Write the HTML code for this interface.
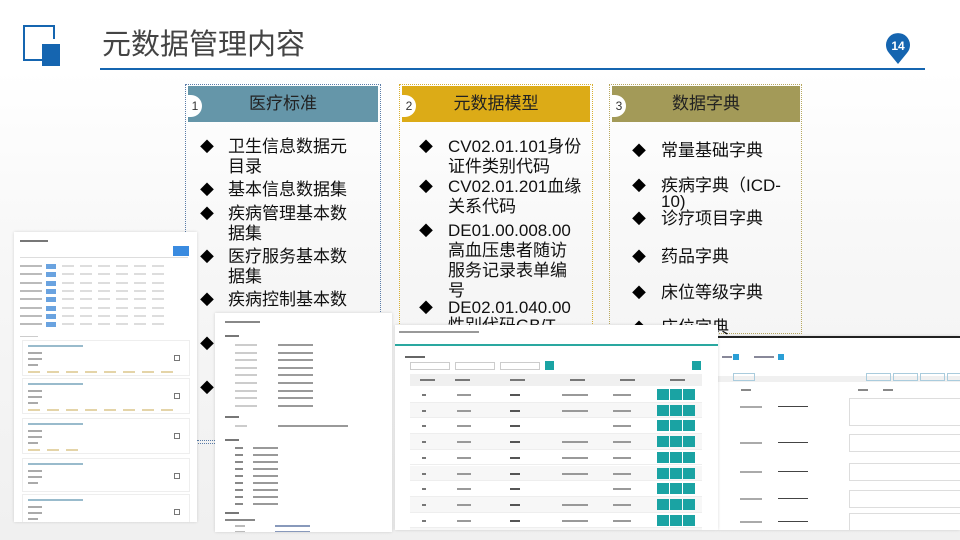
<!DOCTYPE html>
<html><head><meta charset="utf-8">
<style>
*{margin:0;padding:0;box-sizing:border-box}
body{width:960px;height:540px;overflow:hidden;background:#fff;position:relative;font-family:"Liberation Sans","Noto Sans CJK SC",sans-serif}
.abs{position:absolute}
.bg{position:absolute;left:0;top:70px;width:960px;height:470px;background:linear-gradient(#fff 0,#f7f7f7 40%,#f0f0f0 100%)}
.t{position:absolute;font-size:17px;color:#111;white-space:nowrap;line-height:20px}
.d{position:absolute;font-size:14px;color:#000;line-height:20px}
.box{position:absolute;border:1.5px dotted}
.hd{position:absolute;height:36px;color:#222;font-size:17px;text-align:center;line-height:36px}
.num{position:absolute;width:14px;height:22px;background:#fff;border-radius:0 11px 11px 0;font-size:12px;line-height:22px;text-align:center;color:#333}
.panel{position:absolute;background:#fff;box-shadow:0 0 3px rgba(0,0,0,.15);overflow:hidden}
.bar{position:absolute;height:3px;background:#bbb}
</style></head><body>
<div class="bg"></div>
<div class="abs" style="left:23px;top:25px;width:20px;height:36px;border:2px solid #1565b0;border-right:none"></div>
<div class="abs" style="left:23px;top:25px;width:32px;height:2px;background:#1565b0"></div>
<div class="abs" style="left:23px;top:59px;width:20px;height:2px;background:#1565b0"></div>
<div class="abs" style="left:53px;top:25px;width:2px;height:14px;background:#1565b0"></div>
<div class="abs" style="left:42px;top:44px;width:18px;height:22px;background:#1565b0"></div>
<div class="abs" style="left:102px;top:26px;font-size:29px;color:#444;line-height:38px">元数据管理内容</div>
<div class="abs" style="left:100px;top:68px;width:825px;height:2px;background:#1565b0"></div>
<svg class="abs" style="left:884px;top:31px" width="28" height="34" viewBox="0 0 28 34"><path d="M14 33 L5 22 A12 12 0 1 1 23 22 Z" fill="#1565b0"/><text x="14" y="19" font-size="12" font-weight="bold" fill="#fff" text-anchor="middle" font-family="Liberation Sans">14</text></svg>

<div class="box" style="left:185px;top:84px;width:196px;height:360px;border-color:#5a7ca8"></div>
<div class="box" style="left:399px;top:84px;width:194px;height:250px;border-color:#d8b030"></div>
<div class="box" style="left:609px;top:84px;width:193px;height:250px;border-color:#b8a860"></div>
<div class="hd" style="left:188px;top:86px;width:190px;background:#6596a9">医疗标准</div>
<div class="hd" style="left:402px;top:86px;width:188px;background:#dcab17">元数据模型</div>
<div class="hd" style="left:612px;top:86px;width:188px;background:#a39a58">数据字典</div>
<div class="num" style="left:188px;top:95px">1</div>
<div class="num" style="left:402px;top:95px">2</div>
<div class="num" style="left:612px;top:95px">3</div>

<div class="d" style="left:200px;top:137px">◆</div><div class="t" style="left:228px;top:137px">卫生信息数据元</div>
<div class="t" style="left:228px;top:157px">目录</div>
<div class="d" style="left:200px;top:180px">◆</div><div class="t" style="left:228px;top:180px">基本信息数据集</div>
<div class="d" style="left:200px;top:204px">◆</div><div class="t" style="left:228px;top:204px">疾病管理基本数</div>
<div class="t" style="left:228px;top:224px">据集</div>
<div class="d" style="left:200px;top:247px">◆</div><div class="t" style="left:228px;top:247px">医疗服务基本数</div>
<div class="t" style="left:228px;top:267px">据集</div>
<div class="d" style="left:200px;top:290px">◆</div><div class="t" style="left:228px;top:290px">疾病控制基本数</div>
<div class="d" style="left:200px;top:334px">◆</div>
<div class="d" style="left:200px;top:378px">◆</div>
<div class="d" style="left:419px;top:137px">◆</div><div class="t" style="left:448px;top:137px">CV02.01.101身份</div>
<div class="t" style="left:448px;top:157px">证件类别代码</div>
<div class="d" style="left:419px;top:177px">◆</div><div class="t" style="left:448px;top:177px">CV02.01.201血缘</div>
<div class="t" style="left:448px;top:197px">关系代码</div>
<div class="d" style="left:419px;top:221px">◆</div><div class="t" style="left:448px;top:221px">DE01.00.008.00</div>
<div class="t" style="left:448px;top:241px">高血压患者随访</div>
<div class="t" style="left:448px;top:261px">服务记录表单编</div>
<div class="t" style="left:448px;top:281px">号</div>
<div class="d" style="left:419px;top:298px">◆</div><div class="t" style="left:448px;top:298px">DE02.01.040.00</div>
<div class="t" style="left:448px;top:316px">性别代码GB/T</div>
<div class="d" style="left:632px;top:141px">◆</div><div class="t" style="left:661px;top:141px">常量基础字典</div>
<div class="d" style="left:632px;top:176px">◆</div><div class="t" style="left:661px;top:176px">疾病字典（ICD-</div>
<div class="t" style="left:661px;top:192px">10)</div>
<div class="d" style="left:632px;top:209px">◆</div><div class="t" style="left:661px;top:209px">诊疗项目字典</div>
<div class="d" style="left:632px;top:247px">◆</div><div class="t" style="left:661px;top:247px">药品字典</div>
<div class="d" style="left:632px;top:283px">◆</div><div class="t" style="left:661px;top:283px">床位等级字典</div>
<div class="d" style="left:632px;top:318px">◆</div><div class="t" style="left:661px;top:318px">床位字典</div>

<div class="abs" style="left:197px;top:440px;width:20px;border-top:1.5px dotted #5a7ca8"></div>

<div class="panel" id="p1" style="left:14px;top:232px;width:183px;height:290px"></div>
<div class="panel" id="p2" style="left:215px;top:313px;width:177px;height:219px"></div>
<div class="panel" id="p4" style="left:718px;top:336px;width:242px;height:194px;border-top:2px solid #222"></div>
<div class="panel" id="p3" style="left:395px;top:325px;width:323px;height:205px"></div>

<script>
function bar(p,x,y,w,c,h){var d=document.createElement('div');d.className='bar';d.style.left=x+'px';d.style.top=y+'px';d.style.width=w+'px';if(c)d.style.background=c;if(h)d.style.height=h+'px';p.appendChild(d);return d}
function box(p,x,y,w,h,css){var d=document.createElement('div');d.style.cssText='position:absolute;left:'+x+'px;top:'+y+'px;width:'+w+'px;height:'+h+'px;'+css;p.appendChild(d);return d}
var p1=document.getElementById('p1');
bar(p1,6,8,28,'#777',2);
box(p1,6,16,168,10,'border-bottom:1px solid #ddd');
box(p1,159,14,16,10,'background:#3a8be0');
for(var i=0;i<8;i++){var y=33+i*8.3;bar(p1,6,y,22,'#bbb',2);box(p1,32,y-1,10,5,'background:#6aa3e0');for(var j=0;j<6;j++)bar(p1,48+j*18,y,12,'#ddd',2);}
bar(p1,6,104,18,'#ccc',1);
var tops=[108,146,186,226,262];var hs=[36,36,36,34,30];
for(var k=0;k<5;k++){var y=tops[k];box(p1,8,y,168,hs[k],'border:1px solid #eee');bar(p1,14,y+5,55,'#9bc',2);bar(p1,14,y+12,14,'#aaa',2);bar(p1,14,y+18,14,'#aaa',2);bar(p1,14,y+24,10,'#aaa',2);box(p1,160,y+15,6,6,'border:1px solid #777');if(k<3)for(var j=0;j<(k==2?3:8);j++)bar(p1,14+j*19,y+31,12,'#e4d4a8',2);}
var p2=document.getElementById('p2');
bar(p2,10,8,35,'#888',2);bar(p2,10,22,14,'#777',2);
for(var i=0;i<9;i++){bar(p2,20,31+i*7.6,22,'#ccc',2);bar(p2,63,31+i*7.6,35,'#999',2);}
bar(p2,10,103,14,'#777',2);bar(p2,20,112,12,'#ccc',2);bar(p2,63,112,70,'#999',2);
bar(p2,10,126,14,'#777',2);
for(var i=0;i<9;i++){bar(p2,20,134+i*7,8,'#888',2);bar(p2,38,134+i*7,25,'#999',2);}
bar(p2,10,199,14,'#777',2);bar(p2,10,206,30,'#888',2);
for(var i=0;i<5;i++){bar(p2,20,212+i*6,10,'#bbb',2);bar(p2,60,212+i*6,35,'#89b',2);}
var p3=document.getElementById('p3');
bar(p3,4,6,80,'#999',2);box(p3,0,19,323,2,'background:#2aa8a0');
bar(p3,10,31,20,'#666',2);
box(p3,15,37,40,8,'border:1px solid #ccc');box(p3,60,37,40,8,'border:1px solid #ccc');box(p3,105,37,40,8,'border:1px solid #ccc');box(p3,150,36,9,9,'background:#1aa3a3');box(p3,297,36,9,9,'background:#1aa3a3');
box(p3,15,49,292,12,'background:#f0f0f0');
var cols=[20,55,110,170,220,270];
for(var j=0;j<6;j++)bar(p3,cols[j]+5,54,15,'#777',2);
for(var i=0;i<10;i++){var y=62+i*15.7;box(p3,15,y,292,15.7,'border-bottom:1px solid #eee;'+(i%2?'background:#f7f7f7':''));bar(p3,27,y+7,4,'#777',2);bar(p3,62,y+7,14,'#999',2);bar(p3,115,y+7,10,'#555',2);if([0,1,3,4,5,7,8].indexOf(i)>=0)bar(p3,167,y+7,26,'#999',2);bar(p3,218,y+7,18,'#999',2);for(var b=0;b<3;b++)box(p3,262+b*13,y+2,12,11,'background:#1aa3a3');}
box(p3,252,221,50,10,'border:1px solid #ccc');box(p3,301,220,8,12,'background:#1aa3a3');
var p4=document.getElementById('p4');
box(p4,0,0,242,44,'background:#fff;border-bottom:6px solid #f0f0f0');
bar(p4,4,18,10,'#889',2);box(p4,15,16,6,6,'background:#2a9fd6');bar(p4,36,18,20,'#889',2);box(p4,60,16,6,6,'background:#2a9fd6');
box(p4,15,35,22,8,'border:1px solid #acd');
for(var b=0;b<4;b++)box(p4,148+b*27,35,25,8,'border:1px solid #acd');
bar(p4,23,51,10,'#888',2);bar(p4,140,51,10,'#888',2);bar(p4,165,51,10,'#888',2);
var rys=[60,96,125,152,175];var hh=[28,18,18,18,18];
for(var i=0;i<5;i++){bar(p4,22,rys[i]+8,22,'#aaa',2);bar(p4,60,rys[i]+8,30,'#444',1);box(p4,131,rys[i],122,hh[i],'border:1px solid #ddd');}
</script>
</body></html>
